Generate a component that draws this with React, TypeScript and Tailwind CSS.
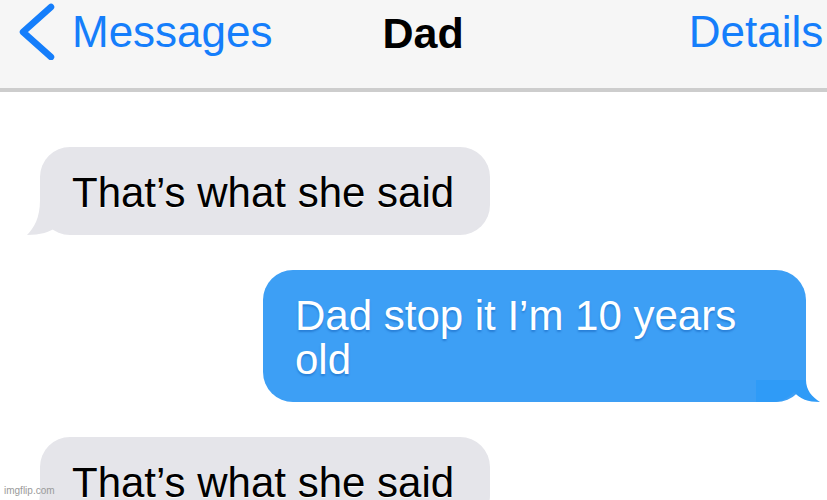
const font = "font-['Liberation_Sans','Helvetica',Arial,sans-serif]";

function GrayTail() {
  return (
    <svg className="absolute left-[-16px] bottom-[-1px]" width="70" height="36" viewBox="0 0 70 36">
      <path
        d="M16,0 L70,0 L70,34 L48,34 C42,34 36,31 33,27 C26,32 16,35 3,35 C10,28 16,18 16,0 Z"
        fill="#e5e5ea"
      />
    </svg>
  );
}

function BlueTail() {
  return (
    <svg className="absolute right-[-16px] bottom-0" width="66" height="36" viewBox="0 0 66 36">
      <path d="M0,0 L50,0 L50,14 L0,14 Z" fill="#3d9ff5" />
      <path
        d="M0,14 L50,14 C50,24 56,31 64,36 C52,36 44,33 38,26 C34,31 26,36 16,36 L0,36 Z"
        fill="#2f9bf7"
      />
    </svg>
  );
}

function GrayBubble({ text }: { text: string }) {
  return (
    <div className="relative ml-[40px] w-[450px] rounded-[30px] bg-[#e5e5ea] pl-[32px] pt-[24px] pb-[20px]">
      <GrayTail />
      <p className="relative text-[42px] leading-[44px] text-black [text-shadow:0_1px_1px_#ffffff]">{text}</p>
    </div>
  );
}

export default function App() {
  return (
    <div className={`relative h-[500px] w-[827px] overflow-hidden bg-white ${font}`}>
      {/* Nav bar */}
      <header className="flex h-[92px] items-start whitespace-nowrap border-b-[4px] border-[#cdcdcd] bg-[#f6f6f6]">
        <svg className="ml-[16px] mt-[2px] shrink-0" width="40" height="58" viewBox="0 0 40 58">
          <polyline
            points="35,5 7,30 35,55"
            fill="none"
            stroke="#157efb"
            strokeWidth="6.5"
            strokeLinecap="round"
            strokeLinejoin="round"
          />
        </svg>
        <span className="ml-[16px] mt-[10px] text-[44px] leading-[44px] text-[#157efb]">Messages</span>
        <span className="ml-[110px] mt-[12px] text-[43px] font-bold leading-[43px] text-black">Dad</span>
        <span className="ml-[225px] mt-[10px] text-[44px] leading-[44px] text-[#157efb]">Details</span>
      </header>

      <div className="flex flex-col pt-[55px]">
        <GrayBubble text="That’s what she said" />

        <div className="relative ml-[263px] mt-[35px] w-[543px] rounded-[30px] bg-[#3d9ff5] pl-[32px] pr-[30px] pt-[24px] pb-[20px]">
          <BlueTail />
          <p className="relative text-[42px] leading-[44px] text-white [text-shadow:0_2px_2px_rgba(0,70,160,0.35)]">
            Dad stop it I’m 10 years old
          </p>
        </div>

        <div className="mt-[35px]">
          <GrayBubble text="That’s what she said" />
        </div>
      </div>

      <span className="absolute left-[4px] bottom-[3px] text-[10px] leading-[12px] text-[#9a9a9a]">imgflip.com</span>
    </div>
  );
}
